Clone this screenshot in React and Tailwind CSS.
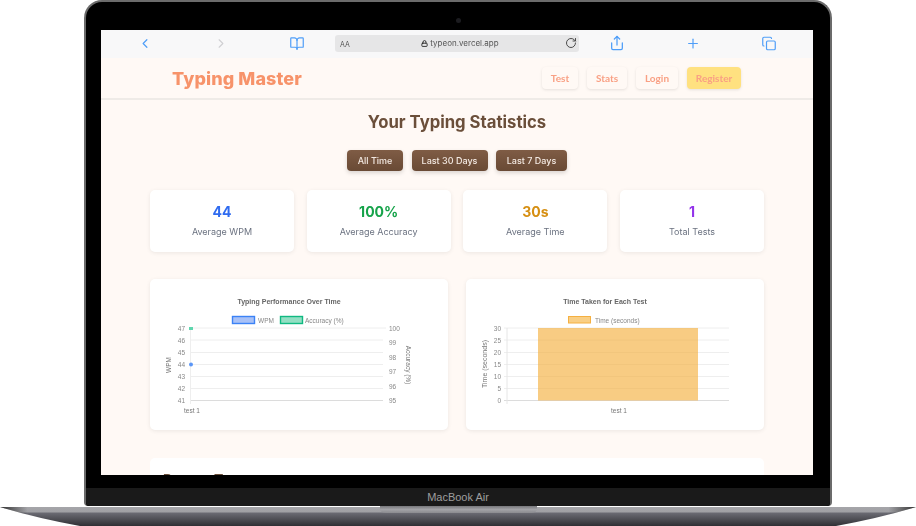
import React from 'react';
import { ChevronLeft, ChevronRight, BookOpen, Share, Plus, Copy, RotateCw, Lock } from 'lucide-react';

const stats = [
  { value: '44', label: 'Average WPM', color: 'text-[#2f6bf0]' },
  { value: '100%', label: 'Average Accuracy', color: 'text-[#16a34a]' },
  { value: '30s', label: 'Average Time', color: 'text-[#d68f12]' },
  { value: '1', label: 'Total Tests', color: 'text-[#9333ea]' },
];

const gridYs = [49, 61, 73.5, 85.5, 97.5, 109.5, 121.5];

const PerformanceChart = () => (
  <svg width="298" height="151" viewBox="0 0 298 151" className="block blur-[0.4px]" fontFamily="Liberation Sans, sans-serif">
    <text x="139" y="24.5" textAnchor="middle" fontSize="7" fontWeight="700" fill="#666">Typing Performance Over Time</text>
    <rect x="82.5" y="37.5" width="22" height="7" fill="#a8c1f7" stroke="#3b82f6" strokeWidth="1.4" />
    <text x="108" y="43.5" fontSize="6.5" fill="#888">WPM</text>
    <rect x="130.5" y="37.5" width="22" height="7" fill="#93dfc3" stroke="#10b981" strokeWidth="1.4" />
    <text x="155" y="43.5" fontSize="6.5" fill="#888">Accuracy (%)</text>
    {gridYs.map((y, i) => (
      <line key={y} x1="40" x2={i === 0 ? 236 : 233} y1={y} y2={y} stroke={i === 6 ? '#dcdcdc' : '#eeeeee'} strokeWidth="1" />
    ))}
    <line x1="40.5" x2="40.5" y1="49" y2="125" stroke="#eeeeee" strokeWidth="1" />
    {['47', '46', '45', '44', '43', '42', '41'].map((n, i) => (
      <text key={n} x="35" y={gridYs[i] + 2.5} textAnchor="end" fontSize="6.5" fill="#888">{n}</text>
    ))}
    {[['100', 49], ['99', 63.5], ['98', 78], ['97', 92.5], ['96', 107], ['95', 121.5]].map(([n, y]) => (
      <text key={n} x="239" y={y + 2.5} fontSize="6.5" fill="#888">{n}</text>
    ))}
    <rect x="39" y="48" width="4" height="3" fill="#5fd6ae" />
    <circle cx="41" cy="85.5" r="2" fill="#5b96f7" />
    <text transform="translate(21 86) rotate(-90)" textAnchor="middle" fontSize="6.5" fill="#777">WPM</text>
    <text transform="translate(256 86) rotate(90)" textAnchor="middle" fontSize="6.5" fill="#777">Accuracy (%)</text>
    <text x="42" y="134" textAnchor="middle" fontSize="6.5" fill="#777">test 1</text>
  </svg>
);

const TimeChart = () => (
  <svg width="298" height="151" viewBox="0 0 298 151" className="block blur-[0.4px]" fontFamily="Liberation Sans, sans-serif">
    <text x="139" y="24.5" textAnchor="middle" fontSize="7" fontWeight="700" fill="#666">Time Taken for Each Test</text>
    <rect x="102.5" y="37.5" width="22" height="6.5" fill="#f9cf85" stroke="#f5b041" strokeWidth="1" />
    <text x="129" y="43.5" fontSize="6.5" fill="#888">Time (seconds)</text>
    {gridYs.map((y, i) => (
      <line key={y} x1="38" x2="263" y1={y} y2={y} stroke={i === 6 ? '#dcdcdc' : '#eeeeee'} strokeWidth="1" />
    ))}
    <line x1="41" x2="41" y1="49" y2="125" stroke="#e6e6e6" strokeWidth="1" />
    <rect x="72" y="49" width="160" height="72.5" fill="#f5b041" fillOpacity="0.65" />
    {['30', '25', '20', '15', '10', '5', '0'].map((n, i) => (
      <text key={n} x="35" y={gridYs[i] + 2.5} textAnchor="end" fontSize="6.5" fill="#888">{n}</text>
    ))}
    <text transform="translate(21 85) rotate(-90)" textAnchor="middle" fontSize="7" fill="#777">Time (seconds)</text>
    <text x="153" y="134" textAnchor="middle" fontSize="6.5" fill="#777">test 1</text>
  </svg>
);

const BrowserBar = () => (
  <div className="flex items-center h-[28px] pb-[2px] bg-[#f8f8f9] text-[#4f9ef8] shrink-0">
    <div className="flex items-center gap-[52px] pl-[32px] w-[234px]">
      <ChevronLeft size={24} strokeWidth={1.9} className="w-[24px] h-[15px]" />
      <ChevronRight size={24} strokeWidth={1.7} className="w-[24px] h-[15px] text-[#cfcfd2]" />
      <BookOpen size={24} strokeWidth={1.9} className="w-[24px] h-[15px]" />
    </div>
    <div className="relative flex items-center justify-center w-[244px] h-[17px] pl-[6px] bg-[#e6e6e7] rounded-[3px] text-[#555] font-['Inter',sans-serif] text-[8px]">
      <span className="absolute left-[5px] top-[5px] text-[7px] leading-[10px] text-[#555]">AA</span>
      <Lock size={7} strokeWidth={3} className="mr-[2px] text-[#222]" />
      <span>typeon.vercel.app</span>
      <RotateCw size={12} strokeWidth={1.9} className="absolute right-[2px] text-[#444]" />
    </div>
    <div className="flex items-center gap-[52px] pl-[26px]">
      <Share size={24} strokeWidth={1.9} className="w-[24px] h-[16px]" />
      <Plus size={24} strokeWidth={1.9} className="w-[24px] h-[15px]" />
      <Copy size={24} strokeWidth={1.9} className="w-[24px] h-[15px]" />
    </div>
  </div>
);

const Nav = () => (
  <div className="flex items-center h-[42px] pl-[71px] bg-[#fff9f5] border-b-2 border-[#efebe7] shrink-0">
    <span className="font-['Inter',sans-serif] font-extrabold text-[18px] tracking-[0.1px] text-[#f7936a] w-[370px]">Typing Master</span>
    <div className="flex gap-[9px] font-['Lato',sans-serif] font-bold text-[10px] text-[#f9a084]">
      <span className="flex items-center justify-center w-[36px] h-[22px] pt-[1px] rounded-[4px] bg-[#fff9f5] shadow-[0_1px_3px_rgba(0,0,0,0.1)]">Test</span>
      <span className="flex items-center justify-center w-[40px] h-[22px] pt-[1px] rounded-[4px] bg-[#fff9f5] shadow-[0_1px_3px_rgba(0,0,0,0.1)]">Stats</span>
      <span className="flex items-center justify-center w-[42px] h-[22px] pt-[1px] rounded-[4px] bg-[#fff9f5] shadow-[0_1px_3px_rgba(0,0,0,0.1)]">Login</span>
      <span className="flex items-center justify-center w-[54px] h-[22px] pt-[1px] rounded-[4px] bg-[#ffe180] shadow-[0_1px_3px_rgba(0,0,0,0.1)]">Register</span>
    </div>
  </div>
);

const Screen = () => (
  <div className="flex flex-col w-[712px] h-[445px] mr-[2px] overflow-hidden bg-[#fff9f5] blur-[0.5px] font-['Inter',sans-serif]">
    <BrowserBar />
    <Nav />
    <main className="flex flex-col px-[49px] pt-[10px]">
      <h1 className="h-[24px] leading-[24px] text-center text-[16.7px] font-bold text-[#6b4f3a]">Your Typing Statistics</h1>
      <div className="flex justify-center gap-[8.5px] mt-[16px] text-[9px] font-medium text-[#f3e9e2]">
        <span className="flex items-center justify-center w-[56px] h-[21px] rounded-[4px] bg-gradient-to-b from-[#7f5c45] to-[#694a35] shadow-[0_2px_4px_rgba(0,0,0,0.15)]">All Time</span>
        <span className="flex items-center justify-center w-[76px] h-[21px] rounded-[4px] bg-gradient-to-b from-[#7f5c45] to-[#694a35] shadow-[0_2px_4px_rgba(0,0,0,0.15)]">Last 30 Days</span>
        <span className="flex items-center justify-center w-[71px] h-[21px] rounded-[4px] bg-gradient-to-b from-[#7f5c45] to-[#694a35] shadow-[0_2px_4px_rgba(0,0,0,0.15)]">Last 7 Days</span>
      </div>
      <div className="grid grid-cols-4 gap-[12.7px] mt-[19px]">
        {stats.map((s) => (
          <div key={s.label} className="flex flex-col items-center h-[62px] pt-[13px] bg-white rounded-[5px] shadow-[0_1px_4px_rgba(0,0,0,0.08)]">
            <span className={`text-[14px] leading-[18px] font-bold ${s.color}`}>{s.value}</span>
            <span className="mt-[4px] text-[9px] leading-[14px] text-[#6b7280]">{s.label}</span>
          </div>
        ))}
      </div>
      <div className="grid grid-cols-2 gap-[18px] mt-[27px]">
        <div className="h-[151px] bg-white rounded-[5px] shadow-[0_1px_4px_rgba(0,0,0,0.08)]"><PerformanceChart /></div>
        <div className="h-[151px] bg-white rounded-[5px] shadow-[0_1px_4px_rgba(0,0,0,0.08)]"><TimeChart /></div>
      </div>
      <div className="h-[60px] mt-[28px] pt-[13px] pl-[13px] bg-white rounded-[5px] text-[14px] leading-[18px] font-bold text-[#6b4f3a]">Recent Tests</div>
    </main>
  </div>
);

const Base = () => (
  <svg width="916" height="20" viewBox="0 0 916 20" className="block shrink-0">
    <defs>
      <linearGradient id="deck" x1="0" x2="0" y1="0" y2="1">
        <stop offset="0" stopColor="#a5a5a9" />
        <stop offset="0.26" stopColor="#a0a0a4" />
        <stop offset="0.32" stopColor="#6a6a72" />
        <stop offset="1" stopColor="#2f2f34" />
      </linearGradient>
      <linearGradient id="notch" x1="0" x2="0" y1="0" y2="1">
        <stop offset="0" stopColor="#77777b" />
        <stop offset="0.5" stopColor="#a3a3a7" />
        <stop offset="1" stopColor="#8b8b8f" />
      </linearGradient>
      <linearGradient id="tips" x1="0" x2="1" y1="0" y2="0">
        <stop offset="0" stopColor="#222" stopOpacity="0.9" />
        <stop offset="0.03" stopColor="#222" stopOpacity="0" />
        <stop offset="0.97" stopColor="#222" stopOpacity="0" />
        <stop offset="1" stopColor="#222" stopOpacity="0.9" />
      </linearGradient>
    </defs>
    <path d="M0 1 H916 Q880 12 836 20 H80 Q36 12 0 1 Z" fill="url(#deck)" />
    <path d="M0 1 H916 Q880 12 836 20 H80 Q36 12 0 1 Z" fill="url(#tips)" />
    <path d="M380 0 H537 V3 Q537 7 530 7 H387 Q380 7 380 3 Z" fill="url(#notch)" />
  </svg>
);

export default function App() {
  return (
    <div className="flex flex-col items-center w-[916px] h-[526px] overflow-hidden bg-white">
      <div className="flex flex-col items-center w-[748px] h-[506px] shrink-0 bg-black rounded-t-[18px] rounded-b-[4px] border-x-2 border-t-2 border-[#6b6b6b]">
        <div className="h-[28px] w-full flex justify-center pt-[16px] shrink-0">
          <span className="w-[5px] h-[5px] rounded-full bg-[#1c1c20]"></span>
        </div>
        <Screen />
        <div className="mt-[13px] flex-1 w-full flex items-center justify-center bg-[#1a1a1a] rounded-b-[4px] font-['Liberation_Sans',sans-serif] text-[11px] text-[#9e9e9e]">MacBook Air</div>
      </div>
      <Base />
    </div>
  );
}
